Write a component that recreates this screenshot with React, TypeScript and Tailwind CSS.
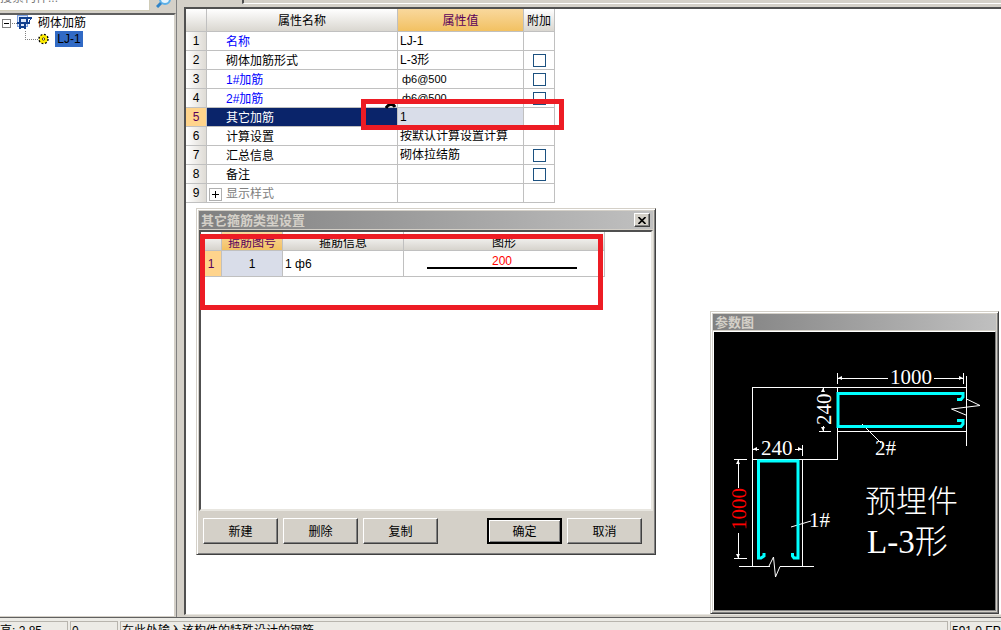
import { ReactNode } from 'react'
import clsx from 'clsx'

type Row = {
  name: string
  value: string
  extra: boolean
  link?: boolean
  rebar?: boolean
}

const rows: Row[] = [
  { name: '名称', value: 'LJ-1', extra: false, link: true },
  { name: '砌体加筋形式', value: 'L-3形', extra: true },
  { name: '1#加筋', value: 'ф6@500', extra: true, link: true, rebar: true },
  { name: '2#加筋', value: 'ф6@500', extra: true, link: true, rebar: true },
  { name: '其它加筋', value: '1', extra: false },
  { name: '计算设置', value: '按默认计算设置计算', extra: false },
  { name: '汇总信息', value: '砌体拉结筋', extra: true },
  { name: '备注', value: '', extra: true },
  { name: '显示样式', value: '', extra: false },
]

const SELECTED = 4
const EXPANDABLE = 8

function DialogButton({ children, primary }: { children: ReactNode; primary?: boolean }) {
  return (
    <button
      type="button"
      className={clsx(
        'h-[26px] w-[75px] bg-[#d4d0c8] pt-px text-center leading-[22px]',
        primary
          ? 'border-2 border-black shadow-[inset_1px_1px_0_#fff,inset_-1px_-1px_0_#808080]'
          : 'border border-t-white border-l-white border-r-[#404040] border-b-[#404040] shadow-[inset_-1px_-1px_0_#808080]',
      )}
    >
      {children}
    </button>
  )
}

function ObjectTree() {
  return (
    <aside className="flex w-[176px] shrink-0 flex-col">
      <div className="flex h-[13px] shrink-0 items-end overflow-hidden">
        <input
          aria-label="搜索构件"
          placeholder="搜索构件..."
          className="mb-[2px] h-[20px] w-[150px] border-r border-b border-[#d0ccb8] bg-white pb-[5px] leading-3 outline-none placeholder:text-[#777]"
        />
        <svg className="mb-[5px] ml-[6px]" width="16" height="16" viewBox="0 0 16 16">
          <circle cx="9" cy="7" r="5" fill="#e8f5fd" stroke="#5bb0e8" strokeWidth="2" />
          <path d="M5 11L1 15" stroke="#2f83c8" strokeWidth="3" />
        </svg>
      </div>
      <div className="flex-1 border-t-2 border-r-2 border-b border-t-[#606060] border-r-[#d4d0c8] border-b-[#d4d0c8] bg-white">
        <div className="flex h-4 items-center pl-[2px]">
          <svg className="shrink-0" width="31" height="16" viewBox="0 0 31 16" fill="none" shapeRendering="crispEdges">
            <rect x="0.5" y="4.5" width="8" height="8" stroke="#808080" />
            <path d="M2 8.5h5" stroke="#000" />
            <path d="M10 8.5h5" stroke="#808080" strokeDasharray="1 1" />
            <rect x="15.5" y="0.5" width="10" height="11" stroke="#7da0e0" fill="#dce8fa" />
            <path d="M19 2.500H30M15 7.500H28M18 11.500H24" stroke="#12408f" strokeWidth="2" />
            <path d="M29 3l-2 4" stroke="#12408f" />
            <path d="M18 2v5M25 3v5M18 7v7M23 8v6" stroke="#12408f" strokeWidth="2" />
          </svg>
          <span className="ml-[5px]">砌体加筋</span>
        </div>
        <div className="flex h-4 items-center pl-[25px]">
          <svg className="shrink-0" width="25" height="16" viewBox="0 0 25 16" fill="none">
            <path d="M0.5 0v8.500h12" stroke="#808080" strokeDasharray="1 1" shapeRendering="crispEdges" />
            <circle cx="18.500" cy="8" r="4.500" fill="#ffee00" stroke="#000" strokeWidth="1.500" strokeDasharray="1.800 1.730" />
            <circle cx="18.500" cy="8" r="3.700" fill="#ffee00" />
            <circle cx="18.500" cy="8" r="1.200" fill="#fff" stroke="#554400" />
          </svg>
          <button type="button" className="ml-[5px] h-4 w-7 bg-[#316ac5] leading-4">LJ-1</button>
        </div>
      </div>
    </aside>
  )
}

function PropertyTable() {
  return (
    <table className="w-[369px] table-fixed border-separate border-spacing-0">
      <colgroup>
        <col className="w-[21px]" />
        <col className="w-[191px]" />
        <col className="w-[126px]" />
        <col className="w-[31px]" />
      </colgroup>
      <thead>
        <tr className="h-[23px] bg-linear-to-b from-white to-[#d8d5ce]">
          <th className="border-r border-b border-[#c0c0c0] p-0" />
          <th className="border-r border-b border-[#c0c0c0] p-0 pt-px font-normal">属性名称</th>
          <th className="border-r border-b border-[#c0c0c0] bg-linear-to-b from-[#f9d89c] to-[#f2c161] p-0 pt-px font-normal text-[#5a005a]">
            属性值
          </th>
          <th className="border-r border-b border-[#c0c0c0] p-0 pt-px font-normal">附加</th>
        </tr>
      </thead>
      <tbody>
        {rows.map((row, i) => (
          <tr key={i} className="h-[19px]">
            <td
              className={clsx(
                'border-r border-b border-[#c0c0c0] p-0 text-center leading-[18px]',
                i === SELECTED ? 'bg-[#ffd48c] text-[#5a005a]' : 'bg-linear-to-r from-white to-[#dedbd5]',
              )}
            >
              {i + 1}
            </td>
            <td
              className={clsx(
                'border-r border-b border-[#c0c0c0] p-0 pt-[2px] leading-4',
                i === SELECTED && 'bg-[#0a246a] text-white',
                row.link && 'text-[#0000ff]',
                i === EXPANDABLE && 'text-[#808080]',
              )}
            >
              <div className="flex items-center">
                <span className="flex w-[19px] shrink-0 pl-[2px]">
                  {i === EXPANDABLE && (
                    <button type="button" aria-label="展开" className="size-[13px] border border-[#b0b0b0] bg-white">
                      <svg width="11" height="11" viewBox="0 0 11 11" shapeRendering="crispEdges">
                        <path d="M2 5.500h7M5.500 2v7" stroke="#000" />
                      </svg>
                    </button>
                  )}
                </span>
                {row.name}
              </div>
            </td>
            <td
              className={clsx(
                'border-r border-b border-[#c0c0c0] py-0 pr-0 leading-[18px]',
                row.rebar ? 'pl-1 text-[11px]' : 'pl-[2px]',
                i === SELECTED && 'bg-[#d9dde9]',
              )}
            >
              {row.value}
            </td>
            <td className="border-r border-b border-[#c0c0c0] p-0">
              {row.extra && (
                <input
                  type="checkbox"
                  aria-label={`${row.name} 附加`}
                  className="mx-auto block size-[13px] appearance-none border border-[#1c5180] bg-white"
                />
              )}
            </td>
          </tr>
        ))}
      </tbody>
    </table>
  )
}

function StirrupDialog() {
  return (
    <section className="absolute top-[199px] left-[10px] flex h-[347px] w-[460px] flex-col border border-t-[#d4d0c8] border-l-[#d4d0c8] border-r-[#404040] border-b-[#404040] bg-[#d4d0c8] p-[2px] shadow-[inset_1px_1px_0_#fff,inset_-1px_-1px_0_#808080]">
      <header className="flex h-[18px] shrink-0 items-center justify-between bg-linear-to-r from-[#808080] to-[#c0c0c0] pr-[3px] pl-[2px] font-bold text-[#d4d0c8]">
        <h2 className="pt-[2px] text-[13px]">其它箍筋类型设置</h2>
        <button
          type="button"
          aria-label="关闭"
          className="flex h-[14px] w-4 items-center justify-center border border-t-white border-l-white border-r-[#404040] border-b-[#404040] bg-[#d4d0c8] shadow-[inset_-1px_-1px_0_#808080]"
        >
          <svg width="8" height="7" viewBox="0 0 8 7">
            <path d="M0.500 0L7.500 7M7.500 0L0.500 7" stroke="#000" strokeWidth="1.600" />
          </svg>
        </button>
      </header>
      <div className="mt-px h-[281px] shrink-0 border-2 border-t-[#505050] border-l-[#505050] border-r-[#e8e6e0] border-b-[#e8e6e0] bg-white">
        <table className="w-[404px] table-fixed border-separate border-spacing-0">
          <colgroup>
            <col className="w-[21px]" />
            <col className="w-[61px]" />
            <col className="w-[121px]" />
            <col className="w-[201px]" />
          </colgroup>
          <thead>
            <tr className="h-[19px] bg-linear-to-b from-white to-[#d4d1ca] leading-[14px]">
              <th className="border-r border-b border-[#c0c0c0] p-0" />
              <th className="border-r border-b border-[#c0c0c0] bg-linear-to-b from-[#f9d89c] to-[#f2c161] p-0 pt-1 font-normal text-[#5a005a]">
                箍筋图号
              </th>
              <th className="border-r border-b border-[#c0c0c0] p-0 pt-1 font-normal">箍筋信息</th>
              <th className="border-r border-b border-[#c0c0c0] p-0 pt-1 font-normal">图形</th>
            </tr>
          </thead>
          <tbody>
            <tr className="h-[26px]">
              <td className="border-r border-b border-[#c0c0c0] bg-[#ffd48c] p-0 text-center text-[#5a005a]">1</td>
              <td className="border-r border-b border-[#c0c0c0] bg-[#d9dde9] p-0 text-center">1</td>
              <td className="border-r border-b border-[#c0c0c0] p-0 pl-[2px]">1 ф6</td>
              <td className="border-r border-b border-[#c0c0c0] p-0 pr-1 text-center leading-3 text-[#ff0000]">
                200
                <div className="mx-auto mb-1 h-[2px] w-[150px] bg-black" />
              </td>
            </tr>
          </tbody>
        </table>
      </div>
      <footer className="flex items-center justify-between pt-[7px] pr-[11px] pl-1">
        <div className="flex gap-[5px]">
          <DialogButton>新建</DialogButton>
          <DialogButton>删除</DialogButton>
          <DialogButton>复制</DialogButton>
        </div>
        <div className="flex gap-[5px]">
          <DialogButton primary>确定</DialogButton>
          <DialogButton>取消</DialogButton>
        </div>
      </footer>
      <div className="pointer-events-none absolute top-[25px] left-[3px] h-[76px] w-[403px] border-[5px] border-[#ed1c24]" />
    </section>
  )
}

function ParameterWindow() {
  return (
    <section className="absolute top-[302px] right-[2px] flex w-[289px] flex-col border border-t-[#d4d0c8] border-l-[#d4d0c8] border-r-[#404040] border-b-[#404040] bg-[#d4d0c8] p-[2px] shadow-[inset_1px_1px_0_#fff,inset_-1px_-1px_0_#808080]">
      <h2 className="h-4 bg-linear-to-r from-[#808080] to-[#c0c0c0] pl-[2px] text-[13px] leading-[18px] font-bold text-[#d4d0c8]">
        参数图
      </h2>
      <div className="mt-px border border-t-white border-l-white border-r-[#808080] border-b-[#808080] bg-black">
        <svg
          className="block w-full"
          viewBox="-1 0 281 278"
          fill="none"
          fontFamily='"Liberation Serif", "Noto Sans CJK SC", serif'
          fontSize="21"
        >
          <g stroke="#fff" shapeRendering="crispEdges">
            {/* wall outline */}
            <path d="M37.500 234V55.500H252M122.500 55V127.500H37M87.500 127V234M122 99.500H252M251.500 44V114M24 234.500H55M65 234.500H99" />
            {/* dimension lines */}
            <path d="M122.500 41V52M122 46.500H173M219 46.500H249M248.500 41V52" />
            <path d="M108.500 56V60M108.500 94V99M104 99.500H116" />
            <path d="M38 117.500H44M80 117.500H87M87.500 113V124" />
            <path d="M19 127.500H32M23.500 127V156M23.500 201V226M19 226.500H32" />
          </g>
          <g fill="#fff">
            <path d="M123 46l4-2v4zM248 46l-4-2v4zM108 56l-2 4h4zM108 99l-2-4h4zM38 117l4-2v4zM87 117l-4-2v4zM23 128l-2 4h4zM23 226l-2-4h4z" />
          </g>
          {/* break marks and leaders */}
          <path
            d="M251.500 67L265 73.500L236.500 77L252 83.500M54 234L58.500 225L60.500 245L65 234.500M147 92L166 111M76 195L96 189"
            stroke="#fff"
          />
          {/* rebar */}
          <path
            d="M242 67.500H246L248 65V61.500H123V94.500H246L248 92V88.500L242 88.500M49 221V224L46 226H43.500V129H83V226H79L77.500 224V221"
            stroke="#00ffff"
            strokeWidth="3"
          />
          <g fill="#fff">
            <text x="175" y="52">1000</text>
            <text x="46" y="123">240</text>
            <text transform="translate(116 93) rotate(-90)">240</text>
            <text x="160" y="123">2#</text>
            <text x="94" y="195">1#</text>
            <text x="150" y="180" fontSize="31" fontWeight="300">预埋件</text>
            <text x="152" y="221" fontSize="33" fontWeight="300">L-3形</text>
          </g>
          <text transform="translate(31 198) rotate(-90)" fill="#ff0000">1000</text>
        </svg>
      </div>
    </section>
  )
}

function StatusBar() {
  return (
    <footer className="flex h-[13px] shrink-0 gap-[2px] overflow-hidden border-t border-[#606060] bg-[#ecebe6] pt-[3px] leading-[18px] whitespace-nowrap">
      <div className="h-5 w-[68px] shrink-0 border border-l-0 border-[#b8b5ae]">高: 2.85</div>
      <div className="h-5 w-[48px] shrink-0 border border-[#b8b5ae] pl-px">0</div>
      <div className="h-5 flex-1 border border-[#b8b5ae] pl-px">在此处输入该构件的特殊设计的钢筋</div>
      <div className="h-5 w-[51px] shrink-0 overflow-hidden border border-r-0 border-[#b8b5ae] pl-px">591.0 FPS</div>
    </footer>
  )
}

export default function App() {
  return (
    <div className='flex h-screen flex-col overflow-hidden bg-[#d4d0c8] font-["Liberation_Sans","Noto_Sans_CJK_SC",sans-serif] text-[12px] leading-4 text-black'>
      <div className="flex min-h-0 flex-1">
        <ObjectTree />
        <main className="flex min-w-0 flex-1 flex-col border-l border-[#808080] pb-[2px] pl-[7px]">
          <div className="flex h-[7px] shrink-0 pb-[3px] pl-[58px]">
            <div className="flex-1 border-b border-l-2 border-b-white border-l-[#505050]" />
          </div>
          <div className="relative flex-1 border-t-2 border-b border-l-2 border-t-[#505050] border-b-[#e8e6e0] border-l-[#505050] bg-white">
            <PropertyTable />
            <svg className="absolute top-[94px] left-[199px]" width="12" height="8" viewBox="0 0 12 8" fill="none">
              <path d="M1 5C3 1 8 0 10 4" stroke="#000" strokeWidth="3" />
            </svg>
            <div className="pointer-events-none absolute top-[90px] left-[175px] h-[31px] w-[203px] border-[5px] border-[#ed1c24]" />
            <StirrupDialog />
            <ParameterWindow />
          </div>
        </main>
      </div>
      <StatusBar />
    </div>
  )
}
